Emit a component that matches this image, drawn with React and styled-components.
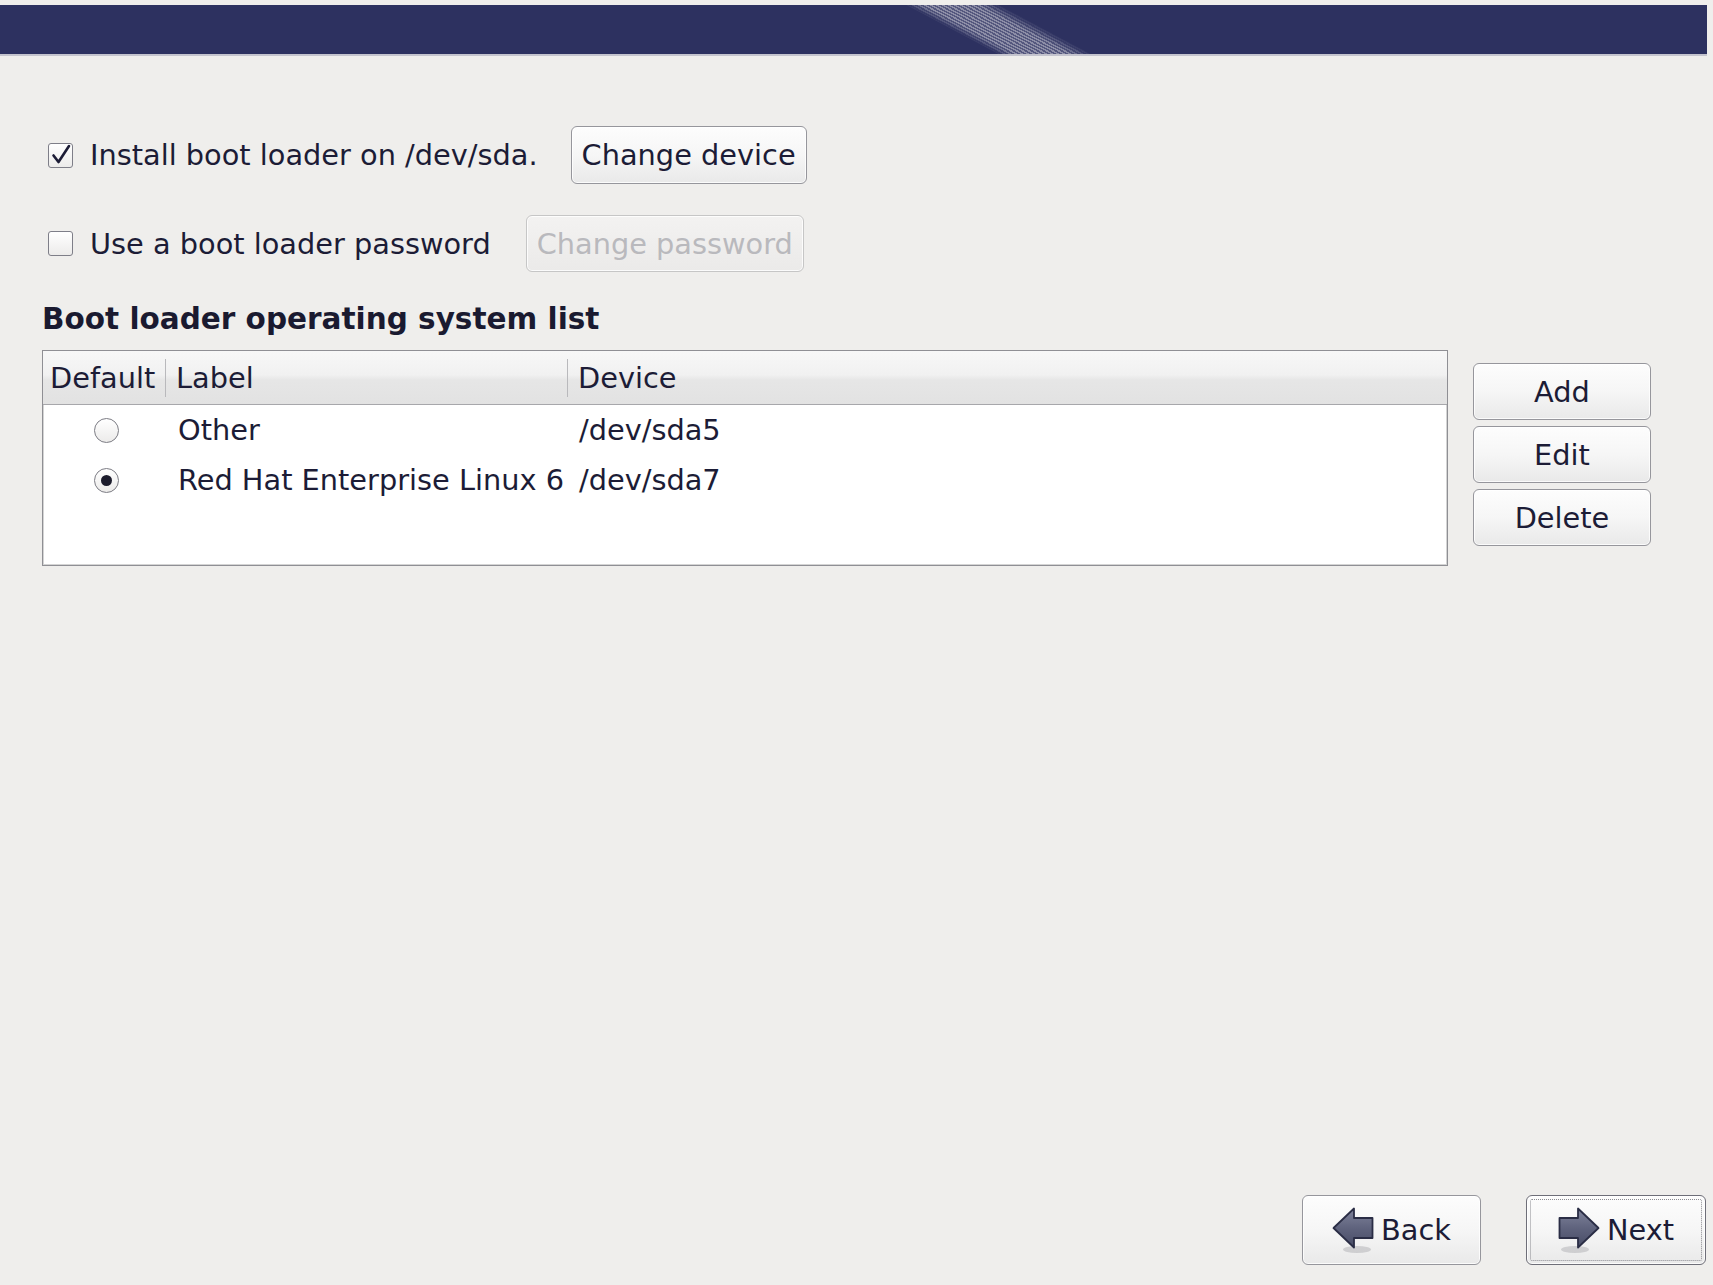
import React from "react";
import styled, { createGlobalStyle, css } from "styled-components";

const GlobalStyle = createGlobalStyle`
  html, body { margin: 0; padding: 0; background: #efeeec; }
  body {
    font-family: "DejaVu Sans", "Noto Sans", sans-serif;
    color: #1c1c36;
    -webkit-font-smoothing: antialiased;
  }
  * { box-sizing: border-box; }
`;

const Page = styled.div`
  display: flex;
  flex-direction: column;
  height: 1285px;
  background: #efeeec;
  padding-top: 5px;
  font-size: 28.8px;
`;

const Banner = styled.div`
  position: relative;
  height: 51px;
  margin-right: 6px;
  background: #2d3160;
  border-bottom: 2px solid #c4c4ce;
  overflow: hidden;

  &::before {
    content: "";
    position: absolute;
    top: 0;
    left: 905px;
    width: 95px;
    height: 49px;
    transform-origin: top left;
    transform: skewX(62deg);
    background:
      repeating-linear-gradient(90deg, rgba(205, 205, 215, 0.6) 0 3px, rgba(205, 205, 215, 0.25) 3px 6px);
    -webkit-mask-image: linear-gradient(90deg, transparent 0%, #000 20%, #000 75%, transparent 100%);
    mask-image: linear-gradient(90deg, transparent 0%, #000 20%, #000 75%, transparent 100%);
  }
`;

const Content = styled.main`
  display: flex;
  flex-direction: column;
  flex: 1;
  padding-top: 70px;
`;

const OptionRow = styled.div`
  display: flex;
  align-items: center;
  height: ${(p) => p.$h || 58}px;
  padding-left: 48px;
  margin-bottom: ${(p) => p.$mb || 0}px;
`;

const CheckBox = styled.span`
  display: inline-flex;
  align-items: center;
  justify-content: center;
  width: 25px;
  height: 25px;
  border: 1.5px solid #7e7e88;
  border-radius: 3px;
  background: linear-gradient(#ffffff, #ecebea);
  flex: none;
`;

const OptionLabel = styled.span`
  margin-left: 17px;
  white-space: nowrap;
`;

const PushButton = styled.button`
  font: inherit;
  font-size: 28.8px;
  color: ${(p) => (p.disabled ? "#b9b9bd" : "#1c1c36")};
  height: ${(p) => p.$h || 57}px;
  width: ${(p) => (p.$w ? p.$w + "px" : "auto")};
  padding: 0 10px;
  margin-left: ${(p) => p.$ml || 0}px;
  border: 1.5px solid ${(p) => (p.disabled ? "#c6c6c6" : "#96969c")};
  border-radius: 6px;
  background: ${(p) =>
    p.disabled
      ? "linear-gradient(#f3f2f1, #ebeae9)"
      : "linear-gradient(#fdfdfd 0%, #f6f6f6 50%, #e9e9e9 100%)"};
  box-shadow: inset 0 0 0 1px rgba(255, 255, 255, 0.8);
  display: inline-flex;
  align-items: center;
  justify-content: center;
  white-space: nowrap;
  flex: none;
  cursor: default;
  ${(p) =>
    p.$focus &&
    css`
      border-color: #6e6e78;
      outline: 1px dotted #8a8a90;
      outline-offset: -5px;
    `}
`;

const Heading = styled.h2`
  margin: 30px 0 14px 42px;
  font-size: 29.5px;
  font-weight: bold;
  line-height: 34px;
  color: #1a1a30;
`;

const ListArea = styled.div`
  display: flex;
  align-items: flex-start;
  gap: 25px;
  padding-left: 42px;
`;

const Table = styled.div`
  width: 1406px;
  height: 216px;
  border: 1px solid #8f8f94;
  box-shadow: inset 0 0 0 1px #d4d4d4;
  background: #ffffff;
  display: flex;
  flex-direction: column;
`;

const Columns = css`
  display: grid;
  grid-template-columns: 122px 402px 1fr;
`;

const HeaderRow = styled.div`
  ${Columns}
  height: 54px;
  background: linear-gradient(#f7f7f7 0%, #f1f1f1 45%, #e6e6e6 55%, #e2e2e2 100%);
  border-bottom: 1px solid #a7a7ab;
`;

const HeaderCell = styled.div`
  display: flex;
  align-items: center;
  padding-left: ${(p) => p.$pl || 0}px;
  white-space: nowrap;
`;

const Divider = styled.span`
  width: 1px;
  height: 38px;
  background: #b9b9bc;
  margin-right: 10px;
  flex: none;
`;

const BodyRow = styled.div`
  ${Columns}
  height: 50px;
`;

const Cell = styled.div`
  display: flex;
  align-items: center;
  justify-content: ${(p) => (p.$center ? "center" : "flex-start")};
  padding-left: ${(p) => p.$pl || 0}px;
  white-space: nowrap;
`;

const Radio = styled.span`
  width: 25px;
  height: 25px;
  border-radius: 50%;
  border: 1.6px solid #7c7c84;
  background: linear-gradient(#ffffff, #ecebea);
  display: inline-flex;
  align-items: center;
  justify-content: center;
  &::after {
    content: "";
    width: 11px;
    height: 11px;
    border-radius: 50%;
    background: ${(p) => (p.$on ? "#1c1c2c" : "transparent")};
  }
`;

const SideButtons = styled.div`
  display: flex;
  flex-direction: column;
  gap: 6px;
  margin-top: 13px;
`;

const Footer = styled.footer`
  margin-top: auto;
  display: flex;
  justify-content: flex-end;
  gap: 45px;
  padding: 0 7px 20px 0;
`;

const NavContent = styled.span`
  display: inline-flex;
  align-items: center;
  gap: 7px;
`;

const Check = () => (
  <svg width="22" height="22" viewBox="0 0 22 22">
    <path
      d="M3.5 11.5 L8.5 18 L19 2"
      fill="none"
      stroke="#1c1c36"
      strokeWidth="2.6"
      strokeLinecap="round"
      strokeLinejoin="round"
    />
  </svg>
);

const Arrow = ({ dir, id }) => (
  <svg
    width="42"
    height="47"
    viewBox="0 0 42 47"
    style={dir === "right" ? { transform: "scaleX(-1)" } : undefined}
  >
    <defs>
      <linearGradient id={id} x1="0" y1="0" x2="0" y2="1">
        <stop offset="0" stopColor="#80849c" />
        <stop offset="0.5" stopColor="#5f637d" />
        <stop offset="1" stopColor="#484c66" />
      </linearGradient>
    </defs>
    <ellipse cx="25" cy="42.5" rx="14" ry="3.5" fill="rgba(60,60,70,0.18)" />
    <path
      d="M1.5 21 L22 1.5 L22 11 L40.5 11 L40.5 31 L22 31 L22 40.5 Z"
      fill={`url(#${id})`}
      stroke="#2a2d45"
      strokeWidth="1.8"
      strokeLinejoin="round"
    />
  </svg>
);

const rows = [
  { label: "Other", device: "/dev/sda5", on: false },
  { label: "Red Hat Enterprise Linux 6", device: "/dev/sda7", on: true },
];

export default function App() {
  return (
    <>
      <GlobalStyle />
      <Page>
        <Banner />
        <Content>
          <OptionRow $h={58} $mb={31}>
            <CheckBox>
              <Check />
            </CheckBox>
            <OptionLabel>Install boot loader on /dev/sda.</OptionLabel>
            <PushButton $ml={33} $h={58}>
              Change device
            </PushButton>
          </OptionRow>
          <OptionRow $h={57}>
            <CheckBox />
            <OptionLabel>Use a boot loader password</OptionLabel>
            <PushButton $ml={35} disabled>
              Change password
            </PushButton>
          </OptionRow>

          <Heading>Boot loader operating system list</Heading>

          <ListArea>
            <Table>
              <HeaderRow>
                <HeaderCell $pl={7}>Default</HeaderCell>
                <HeaderCell>
                  <Divider />
                  Label
                </HeaderCell>
                <HeaderCell>
                  <Divider />
                  Device
                </HeaderCell>
              </HeaderRow>
              {rows.map((r) => (
                <BodyRow key={r.device}>
                  <Cell $center $pl={4}>
                    <Radio $on={r.on} />
                  </Cell>
                  <Cell $pl={13}>{r.label}</Cell>
                  <Cell $pl={12}>{r.device}</Cell>
                </BodyRow>
              ))}
            </Table>
            <SideButtons>
              <PushButton $w={178}>Add</PushButton>
              <PushButton $w={178}>Edit</PushButton>
              <PushButton $w={178}>Delete</PushButton>
            </SideButtons>
          </ListArea>

          <Footer>
            <PushButton $w={179} $h={70}>
              <NavContent>
                <Arrow dir="left" id="arrowBack" />
                Back
              </NavContent>
            </PushButton>
            <PushButton $w={180} $h={70} $focus>
              <NavContent>
                <Arrow dir="right" id="arrowNext" />
                Next
              </NavContent>
            </PushButton>
          </Footer>
        </Content>
      </Page>
    </>
  );
}
